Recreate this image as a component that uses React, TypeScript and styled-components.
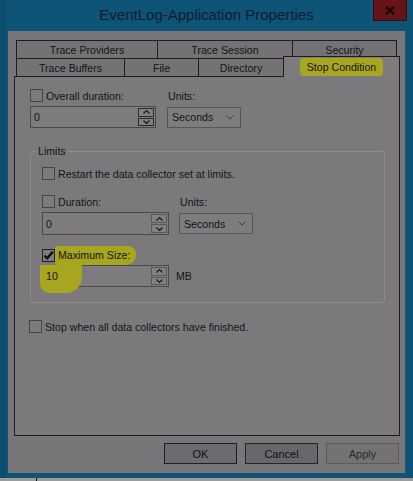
import styled, { createGlobalStyle } from "styled-components";

const GlobalStyle = createGlobalStyle`
  html, body {
    margin: 0;
    padding: 0;
    background: #0e5476;
  }
  body {
    font-family: "Liberation Sans", Arial, sans-serif;
    color: #141414;
  }
  * {
    box-sizing: border-box;
  }
`;

const HIGHLIGHT = "#a8a61e";

const rowOneTabs = [
  { label: "Trace Providers", width: 142 },
  { label: "Trace Session", width: 136 },
  { label: "Security", width: 105 },
];

const rowTwoTabs = [
  { label: "Trace Buffers", width: 109 },
  { label: "File", width: 75 },
  { label: "Directory", width: 86 },
];

function Chevron({ up }: { up?: boolean }) {
  return (
    <svg width="7" height="4" viewBox="0 0 7 4">
      <polyline
        points={up ? "0.5,3.5 3.5,0.5 6.5,3.5" : "0.5,0.5 3.5,3.5 6.5,0.5"}
        fill="none"
        stroke="#1a1a1a"
        strokeWidth="1.2"
      />
    </svg>
  );
}

function CheckBox({ checked }: { checked?: boolean }) {
  return (
    <Box $checked={checked}>
      {checked && (
        <svg width="11" height="11" viewBox="0 0 11 11">
          <path d="M1.5 5.5 L4.2 8.3 L9.8 1.8" fill="none" stroke="#0c0c0c" strokeWidth="2.2" />
        </svg>
      )}
    </Box>
  );
}

function Spinner({
  value,
  width,
  height = 22,
  focused,
  marked,
}: {
  value: string;
  width: number;
  height?: number;
  focused?: boolean;
  marked?: boolean;
}) {
  return (
    <SpinBox $w={width} $h={height}>
      {marked && <InputMark />}
      <SpinText>{value}</SpinText>
      <SpinButtons>
        <SpinButton $focused={focused}>
          <Chevron up />
        </SpinButton>
        <SpinButton $focused={focused}>
          <Chevron />
        </SpinButton>
      </SpinButtons>
    </SpinBox>
  );
}

function UnitSelect() {
  return (
    <Select>
      <span>Seconds</span>
      <svg width="8" height="5" viewBox="0 0 8 5">
        <polyline points="0.5,0.5 4,4 7.5,0.5" fill="none" stroke="#3b3a3d" strokeWidth="1" />
      </svg>
    </Select>
  );
}

export default function App() {
  return (
    <>
      <GlobalStyle />
      <Window>
        <TitleBar>
          <Title>EventLog-Application Properties</Title>
          <CloseButton>
            <svg width="10" height="9" viewBox="0 0 10 9">
              <path d="M1 1 L9 8 M9 1 L1 8" stroke="#1c0506" strokeWidth="2.4" />
            </svg>
          </CloseButton>
        </TitleBar>

        <Client>
          <TabStrip>
            <TabRow>
              {rowOneTabs.map((t) => (
                <Tab key={t.label} $w={t.width}>
                  {t.label}
                </Tab>
              ))}
            </TabRow>
            <TabRow>
              {rowTwoTabs.map((t) => (
                <Tab key={t.label} $w={t.width}>
                  {t.label}
                </Tab>
              ))}
              <Tab $w={117} $active>
                <Marker>Stop Condition</Marker>
              </Tab>
            </TabRow>
          </TabStrip>

          <Panel>
            <FieldGrid $cols="126px 74px" $gap={11}>
              <CheckRow>
                <CheckBox />
                Overall duration:
              </CheckRow>
              <Caption>Units:</Caption>
              <Spinner value="0" width={126} focused />
              <UnitSelect />
            </FieldGrid>

            <Group>
              <Legend>Limits</Legend>
              <GroupBody>
                <CheckRow>
                  <CheckBox />
                  Restart the data collector set at limits.
                </CheckRow>

                <FieldGrid $cols="127px 74px" $gap={10} $top={15}>
                  <CheckRow>
                    <CheckBox />
                    Duration:
                  </CheckRow>
                  <Caption>Units:</Caption>
                  <Spinner value="0" width={127} height={23} />
                  <UnitSelect />
                </FieldGrid>

                <CheckRow $top={14}>
                  <CheckBox checked />
                  <Marker $blob>Maximum Size:</Marker>
                </CheckRow>
                <SizeRow>
                  <Spinner value="10" width={127} marked />
                  <span>MB</span>
                </SizeRow>
              </GroupBody>
            </Group>

            <CheckRow $top={17} $shift={-1}>
              <CheckBox />
              Stop when all data collectors have finished.
            </CheckRow>
          </Panel>

          <ButtonRow>
            <DialogButton $kind="default">OK</DialogButton>
            <DialogButton $kind="normal">Cancel</DialogButton>
            <DialogButton $kind="disabled">Apply</DialogButton>
          </ButtonRow>
        </Client>
        <TaskStrip>
          <Tick />
        </TaskStrip>
      </Window>
    </>
  );
}

const Window = styled.div`
  width: 413px;
  height: 481px;
  display: flex;
  flex-direction: column;
  background: #0e5476;
  border-left: 6px solid #0c4d6d;
`;

const TitleBar = styled.div`
  height: 31px;
  margin-left: -6px;
  display: grid;
  grid-template-columns: 1fr auto 1fr;
  align-items: start;
`;

const Title = styled.div`
  grid-column: 2;
  font-size: 15px;
  line-height: 30px;
  color: #0a1d2c;
`;

const CloseButton = styled.div`
  grid-column: 3;
  justify-self: end;
  margin-right: 6px;
  width: 34px;
  height: 21px;
  background: #661417;
  border: 1px solid #360a0b;
  border-top: none;
  display: flex;
  align-items: center;
  justify-content: center;
`;

const Client = styled.div`
  margin: 0 8px 0 2px;
  height: 442px;
  background: #79767a;
  padding: 9px 5px 0 6px;
  display: flex;
  flex-direction: column;
  font-size: 10.6px;
`;

const TabStrip = styled.div`
  padding-left: 2px;
  display: flex;
  flex-direction: column;
`;

const TabRow = styled.div`
  display: flex;
  align-items: flex-end;
  height: 18px;
`;

const Tab = styled.div<{ $w: number; $active?: boolean }>`
  width: ${(p) => p.$w}px;
  height: ${(p) => (p.$active ? 21 : 18)}px;
  margin-bottom: ${(p) => (p.$active ? -1 : 0)}px;
  margin-left: -1px;
  border: 1px solid #1d1d1d;
  border-bottom: none;
  background: ${(p) => (p.$active ? "#7e7b7f" : "#757276")};
  display: flex;
  align-items: center;
  justify-content: center;
  white-space: nowrap;
  position: ${(p) => (p.$active ? "relative" : "static")};
  z-index: ${(p) => (p.$active ? 1 : "auto")};

  &:first-child {
    margin-left: 0;
  }
`;

const Marker = styled.span<{ $blob?: boolean }>`
  background: ${HIGHLIGHT};
  padding: ${(p) => (p.$blob ? "3px 6px 4px 3px" : "3px 7px")};
  margin-left: ${(p) => (p.$blob ? -3 : 0)}px;
  border-radius: ${(p) => (p.$blob ? "2px 8px 10px 3px" : "4px")};
`;

const Panel = styled.div`
  height: 360px;
  border: 1px solid #1e1e1e;
  background: #7c797d;
  padding: 12px 0 0 15px;
  display: flex;
  flex-direction: column;
  align-items: flex-start;
`;

const FieldGrid = styled.div<{ $cols: string; $gap: number; $top?: number }>`
  display: grid;
  grid-template-columns: ${(p) => p.$cols};
  column-gap: ${(p) => p.$gap}px;
  row-gap: 4px;
  align-items: center;
  margin-top: ${(p) => p.$top ?? 0}px;
`;

const CheckRow = styled.div<{ $top?: number; $shift?: number }>`
  display: flex;
  align-items: center;
  gap: 3px;
  height: 13px;
  white-space: nowrap;
  margin-top: ${(p) => p.$top ?? 0}px;
  margin-left: ${(p) => p.$shift ?? 0}px;
`;

const Caption = styled.div`
  height: 13px;
  line-height: 15px;
  padding-left: 1px;
`;

const Box = styled.span<{ $checked?: boolean }>`
  width: 13px;
  height: 13px;
  flex: none;
  border: 1px solid ${(p) => (p.$checked ? "#202020" : "#454447")};
  background: #7e7b7f;
  display: flex;
  align-items: center;
  justify-content: center;
  position: relative;
  z-index: 1;
`;

const SpinBox = styled.div<{ $w: number; $h: number }>`
  width: ${(p) => p.$w}px;
  height: ${(p) => p.$h}px;
  border: 1px solid #4a494d;
  background: #7e7b7f;
  display: flex;
  position: relative;
`;

const InputMark = styled.div`
  position: absolute;
  left: -3px;
  top: -1px;
  width: 42px;
  height: 28px;
  background: ${HIGHLIGHT};
  border-radius: 0 0 16px 10px;
`;

const SpinText = styled.div`
  flex: 1;
  padding-left: 3px;
  display: flex;
  align-items: center;
  position: relative;
`;

const SpinButtons = styled.div`
  width: 18px;
  display: flex;
  flex-direction: column;
  gap: 1px;
  padding: 1px;
`;

const SpinButton = styled.div<{ $focused?: boolean }>`
  flex: 1;
  border: 1px solid ${(p) => (p.$focused ? "#2c2c2e" : "#59585c")};
  background: #838084;
  display: flex;
  align-items: center;
  justify-content: center;
`;

const Select = styled.div`
  width: 74px;
  height: 21px;
  border: 1px solid #565559;
  background: #7f7c80;
  padding: 0 6px 0 4px;
  display: flex;
  align-items: center;
  justify-content: space-between;
`;

const Group = styled.fieldset`
  margin: 17px 0 0 0;
  width: 355px;
  height: 158px;
  border: 1px solid #8e8b8f;
  border-radius: 3px;
  padding: 0 0 0 5px;
`;

const Legend = styled.legend`
  padding: 0 2px;
  font-size: 10.6px;
`;

const GroupBody = styled.div`
  margin-left: 6px;
  padding-top: 10px;
  display: flex;
  flex-direction: column;
  align-items: flex-start;
`;

const SizeRow = styled.div`
  margin-top: 3px;
  display: flex;
  align-items: center;
  gap: 7px;
`;

const ButtonRow = styled.div`
  display: flex;
  justify-content: flex-end;
  gap: 8px;
  margin-top: 7px;
  padding-right: 1px;
`;

const buttonLook = {
  default: { border: "#142130", bg: "#6d6b70", color: "#111" },
  normal: { border: "#262626", bg: "#69676b", color: "#111" },
  disabled: { border: "#5c5a5e", bg: "#757276", color: "#2a2a2a" },
};

const DialogButton = styled.div<{ $kind: keyof typeof buttonLook }>`
  width: 73px;
  height: 21px;
  border: 1px solid ${(p) => buttonLook[p.$kind].border};
  background: ${(p) => buttonLook[p.$kind].bg};
  color: ${(p) => buttonLook[p.$kind].color};
  display: flex;
  align-items: center;
  justify-content: center;
  font-size: 11px;
`;

const TaskStrip = styled.div`
  margin-top: auto;
  margin-left: -6px;
  height: 3px;
  background: #9c9c9c;
`;

const Tick = styled.div`
  margin-left: 36px;
  width: 1px;
  height: 3px;
  background: #111;
`;
